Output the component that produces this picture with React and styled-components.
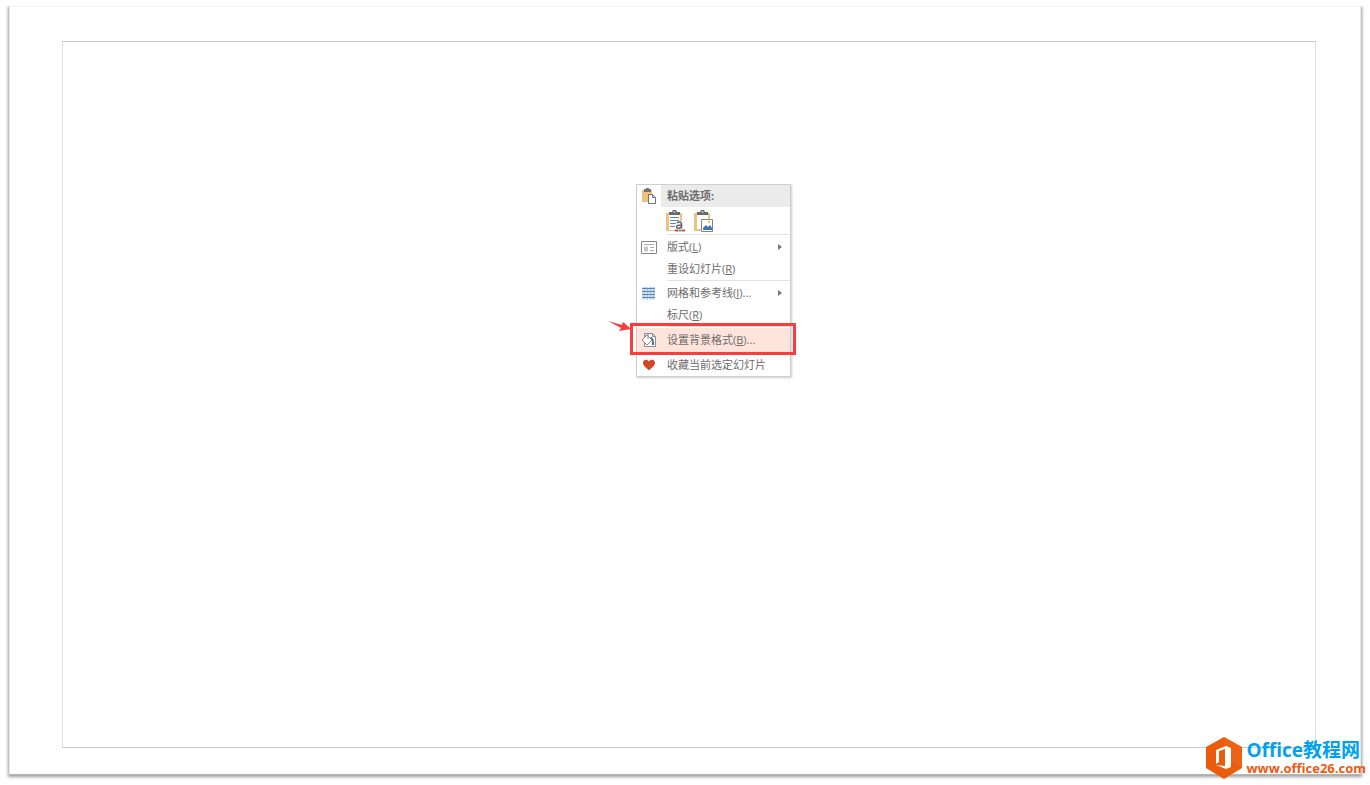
import React from 'react';
import styled, { createGlobalStyle } from 'styled-components';

const GlobalStyle = createGlobalStyle`
  * {
    box-sizing: border-box;
  }
  body {
    margin: 0;
    background: #fff;
    font-family: "Open Sans", "Noto Sans CJK SC", sans-serif;
  }
`;

const Page = styled.div`
  position: relative;
  display: flex;
  min-height: 100vh;
  padding: 6px 9px 10px;
`;

const Slide = styled.main`
  display: flex;
  flex: 1;
  padding: 34px 44px 26px 52px;
  border: 1px solid #e6e6e6;
  border-top-color: #f0f0f0;
  border-bottom-color: #b4b4b4;
  box-shadow: 0 1px 3px 1px rgba(0, 0, 0, 0.38);
  clip-path: inset(0 -9px -10px -9px);
`;

const Canvas = styled.section`
  position: relative;
  flex: 1;
  border: 1px solid #dedede;
  border-top-color: #cbcbcb;
  border-bottom-color: #cbcbcb;
`;

const Menu = styled.div`
  position: absolute;
  top: 142px;
  left: 573px;
  width: 155px;
  border: 1px solid #cfcfcf;
  background: #fff;
  box-shadow: 1px 1px 2px rgba(0, 0, 0, 0.2);
  color: #6c6c6c;
  font-size: 11px;
  line-height: 22px;
`;

const IconCell = styled.span`
  display: flex;
  flex: none;
  align-items: center;
  justify-content: center;
  width: 24px;
  height: 22px;
`;

const MenuHeader = styled.div`
  display: flex;
  height: 22px;
`;

const HeaderTitle = styled.span`
  flex: 1;
  padding-left: 6px;
  background: #ebebeb;
  font-weight: 700;
`;

const PasteRow = styled.div`
  display: flex;
  gap: 6px;
  height: 27px;
  padding: 3px 0 0 28px;
`;

const PasteButton = styled.button`
  display: flex;
  width: 22px;
  height: 22px;
  padding: 0;
  border: 0;
  background: none;
`;

const Divider = styled.hr`
  height: 1px;
  margin: 0 0 1px 30px;
  border: 0;
  background: #e2e2e2;
`;

const Item = styled.button`
  display: flex;
  align-items: center;
  width: 100%;
  height: ${({ $active }) => ($active ? '24px' : '22px')};
  padding: 0 8px 0 0;
  border: 0;
  background: ${({ $active }) => ($active ? '#ffe4dc' : 'none')};
  color: inherit;
  font: inherit;
  text-align: left;
  white-space: nowrap;
`;

const ItemLabel = styled.span`
  flex: 1;
  padding-left: 6px;
`;

const Arrow = styled.span`
  width: 0;
  border: 3px solid transparent;
  border-right: 0;
  border-left: 4px solid #777;
`;

const Highlight = styled.div`
  position: absolute;
  top: 281px;
  left: 567px;
  width: 166px;
  height: 32px;
  border: 3px solid #fb3c3c;
`;

const Pointer = styled.svg`
  position: absolute;
  top: 278px;
  left: 545px;
`;

const Brand = styled.a`
  position: absolute;
  right: 4px;
  bottom: 6px;
  display: flex;
  align-items: center;
  gap: 4px;
  color: #f0590f;
  font-weight: 700;
  text-decoration: none;
`;

const BrandText = styled.span`
  display: flex;
  flex-direction: column;
`;

const BrandName = styled.span`
  color: #00a2ee;
  font-size: 19px;
  line-height: 20px;
`;

const BrandUrl = styled.span`
  font-size: 13px;
  line-height: 16px;
`;

function PasteIcon() {
  return (
    <svg width="16" height="16" viewBox="0 0 16 16">
      <path d="M1 2h10v12H1z" fill="#edc27d" />
      <path d="M3 1h2V0h3v1h2v3H3z" fill="#737373" />
      <path d="M7.500 6.500h4l3 3v6h-7z" fill="#fff" stroke="#737373" />
      <path d="M11.500 6.500v3h3" fill="none" stroke="#737373" />
    </svg>
  );
}

function PasteTextIcon() {
  return (
    <svg width="22" height="22" viewBox="0 0 22 22">
      <path d="M1 3h16v18H1z" fill="#edc27d" />
      <path d="M4 4h11v16H4z" fill="#fff" />
      <path d="M4 2h3l1-2h3l1 2h3v3H4z" fill="#686868" />
      <path d="M8.500 1.500h2v1h-2z" fill="#fff" />
      <path d="M5 7.500h9M5 10.500h9M5 13.500h6M5 16.500h5" stroke="#6488b5" />
      <path d="M11 11h7v9h-7z" fill="#fff" />
      <path
        d="M12 13c2-2 4.500-1 4.500 1v4.500M16 15c-3 0-4.500.5-4.500 2s3 2 4.500 0"
        fill="none"
        stroke="#606060"
        strokeWidth="1.5"
      />
      <path d="M10 20.500h3M17 20.500h3" stroke="#dc482f" strokeWidth="2" />
      <path d="M13.500 20.500h3" stroke="#6b8bb8" strokeWidth="2" />
    </svg>
  );
}

function PastePictureIcon() {
  return (
    <svg width="22" height="22" viewBox="0 0 22 22">
      <path d="M1 3h16v18H1z" fill="#edc27d" />
      <path d="M4 4h11v15H4z" fill="#fff" />
      <path d="M4 2h3l1-2h3l1 2h3v3H4z" fill="#686868" />
      <path d="M8.500 1.500h2v1h-2z" fill="#fff" />
      <path d="M8.500 9.500h11v12h-11z" fill="#fff" stroke="#858585" />
      <path d="M10 20v-2l3-3 2 2 2-2 2 3v2z" fill="#3f76b0" />
      <path d="M15 11h2v2h-2z" fill="#edb875" />
    </svg>
  );
}

function LayoutIcon() {
  return (
    <svg width="16" height="13" viewBox="0 0 16 13">
      <path d="M.5.5h15v12H.5z" fill="#fff" stroke="#858585" />
      <path d="M3 3.500h10" stroke="#aaa" />
      <path d="M3 5.500h4v5H3z" fill="#c7c7c7" />
      <path d="M9 6.500h4M9 9.500h4" stroke="#aaa" />
    </svg>
  );
}

function GridIcon() {
  return (
    <svg width="14" height="13" viewBox="0 0 14 13">
      <path d="M2.500 0v13M5.500 0v13M8.500 0v13M11.500 0v13" stroke="#c3d4ea" />
      <path d="M0 1.500h13M0 4.500h13M0 7.500h13M0 10.500h13" stroke="#5b86bd" strokeWidth="1.500" />
    </svg>
  );
}

function FormatIcon() {
  return (
    <svg width="16" height="16" viewBox="0 0 16 16">
      <path d="M3.500 1.500h8l3 3v10h-11z" fill="#f8f8f8" stroke="#8b8b8b" />
      <path d="M11.500 1.500v3h3" fill="none" stroke="#8b8b8b" />
      <path d="M1 8l5-5 5 5-5 5z" fill="#fff" stroke="#8b8b8b" />
      <path d="M4 5V2.500C4 1 7 1 7 2.500V7" fill="none" stroke="#8b8b8b" />
      <path d="M9 5c3 0 4 2 4 8h-2V8z" fill="#416f9f" />
    </svg>
  );
}

function HeartIcon() {
  return (
    <svg width="14" height="12" viewBox="0 0 14 12">
      <path d="M7 11.500C5.500 9.500 1 7.500 1 3.800 1 .5 5.500-.2 7 2.500 8.500-.2 13 .5 13 3.800c0 3.700-4.500 5.700-6 7.700z" fill="#d24726" />
    </svg>
  );
}

function OfficeLogo() {
  return (
    <svg width="36" height="42" viewBox="0 0 36 42">
      <path d="M18 0l18 10v21L18 42 0 31V10z" fill="#ea5b0c" />
      <path d="M18 0l18 10v21l-18-10z" fill="#f06a1c" opacity=".5" />
      <path d="M10 13l10-4 5 2v19l-5 2-10-4 9 1V12l-6 2v11l-3 2z" fill="#fff" />
    </svg>
  );
}

function MenuItem({ icon, text, hotkey, suffix, submenu, active }) {
  return (
    <Item type="button" role="menuitem" $active={active}>
      <IconCell>{icon}</IconCell>
      <ItemLabel>
        {text}
        {hotkey && <>(<u>{hotkey}</u>)</>}
        {suffix}
      </ItemLabel>
      {submenu && <Arrow />}
    </Item>
  );
}

export default function App() {
  return (
    <Page>
      <GlobalStyle />
      <Slide>
        <Canvas>
          <Menu role="menu">
            <MenuHeader>
              <IconCell><PasteIcon /></IconCell>
              <HeaderTitle>粘贴选项:</HeaderTitle>
            </MenuHeader>
            <PasteRow>
              <PasteButton type="button" aria-label="只保留文本"><PasteTextIcon /></PasteButton>
              <PasteButton type="button" aria-label="图片"><PastePictureIcon /></PasteButton>
            </PasteRow>
            <Divider />
            <MenuItem icon={<LayoutIcon />} text="版式" hotkey="L" submenu />
            <MenuItem text="重设幻灯片" hotkey="R" />
            <Divider />
            <MenuItem icon={<GridIcon />} text="网格和参考线" hotkey="I" suffix="..." submenu />
            <MenuItem text="标尺" hotkey="R" />
            <Divider />
            <MenuItem icon={<FormatIcon />} text="设置背景格式" hotkey="B" suffix="..." active />
            <Divider />
            <MenuItem icon={<HeartIcon />} text="收藏当前选定幻灯片" />
          </Menu>
          <Highlight />
          <Pointer width="24" height="14" viewBox="0 0 24 14">
            <path d="M0 1l14 4 1-3 8 7-12 2 2-3z" fill="#fb3c3c" />
          </Pointer>
        </Canvas>
      </Slide>
      <Brand href="#">
        <OfficeLogo />
        <BrandText>
          <BrandName>Office教程网</BrandName>
          <BrandUrl>www.office26.com</BrandUrl>
        </BrandText>
      </Brand>
    </Page>
  );
}
